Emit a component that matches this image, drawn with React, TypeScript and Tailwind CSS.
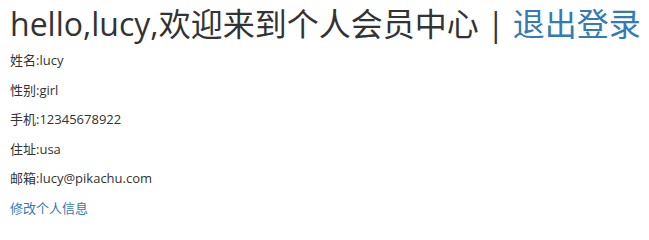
import React from 'react';

const fields = [
  { label: '姓名', value: 'lucy' },
  { label: '性别', value: 'girl' },
  { label: '手机', value: '12345678922' },
  { label: '住址', value: 'usa' },
  { label: '邮箱', value: 'lucy@pikachu.com' },
];

const font = "font-['Open_Sans','Noto_Sans_CJK_SC',sans-serif]";

export default function App() {
  return (
    <div className={`${font} bg-white text-[#333] pl-[10px] min-h-[220px]`}>
      <h1 className="text-[32px] leading-[48px] font-normal whitespace-nowrap mb-[2px]">
        hello,lucy,欢迎来到个人会员中心 | <a href="#" className="text-[#337ab7]">退出登录</a>
      </h1>
      <div className="text-[13px] leading-[20px]">
        {fields.map((f) => (
          <p key={f.label} className="mb-[9.6px]">
            {f.label}:{f.value}
          </p>
        ))}
        <a href="#" className="text-[#337ab7]">修改个人信息</a>
      </div>
    </div>
  );
}
